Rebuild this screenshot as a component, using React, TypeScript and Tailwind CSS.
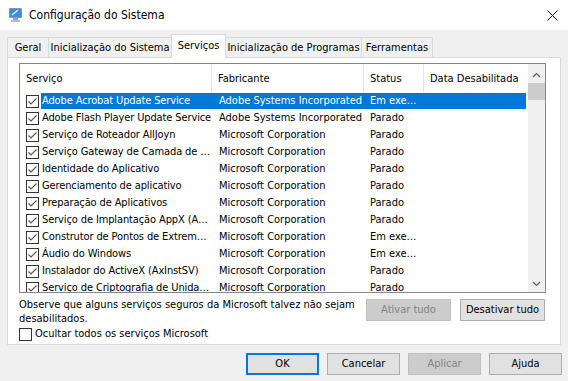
import React from 'react';

const rows = [
  ['Adobe Acrobat Update Service', 'Adobe Systems Incorporated', 'Em exe…'],
  ['Adobe Flash Player Update Service', 'Adobe Systems Incorporated', 'Parado'],
  ['Serviço de Roteador AllJoyn', 'Microsoft Corporation', 'Parado'],
  ['Serviço Gateway de Camada de …', 'Microsoft Corporation', 'Parado'],
  ['Identidade do Aplicativo', 'Microsoft Corporation', 'Parado'],
  ['Gerenciamento de aplicativo', 'Microsoft Corporation', 'Parado'],
  ['Preparação de Aplicativos', 'Microsoft Corporation', 'Parado'],
  ['Serviço de Implantação AppX (A…', 'Microsoft Corporation', 'Parado'],
  ['Construtor de Pontos de Extrem…', 'Microsoft Corporation', 'Em exe…'],
  ['Áudio do Windows', 'Microsoft Corporation', 'Em exe…'],
  ['Instalador do ActiveX (AxInstSV)', 'Microsoft Corporation', 'Parado'],
  ['Serviço de Criptografia de Unida…', 'Microsoft Corporation', 'Parado'],
];

const tabs = [
  { label: 'Geral', w: 'w-[42px]' },
  { label: 'Inicialização do Sistema', w: 'w-[124px]' },
  { label: 'Serviços', w: 'w-[55px]', active: true },
  { label: 'Inicialização de Programas', w: 'w-[137px]' },
  { label: 'Ferramentas', w: 'w-[72px]' },
];

function CheckBox({ checked }: { checked: boolean }) {
  return (
    <svg width="13" height="13" viewBox="0 0 13 13" className="shrink-0">
      <rect x="0.5" y="0.5" width="12" height="12" fill="#fff" stroke="#333" />
      {checked && <polyline points="2.5,6.5 5,9 10.5,3.5" fill="none" stroke="#555" strokeWidth="1.1" />}
    </svg>
  );
}

function AppIcon() {
  return (
    <svg width="16" height="16" viewBox="0 0 16 16">
      <rect x="1" y="1" width="13" height="10" rx="1" fill="#8a95a5" />
      <rect x="2" y="2" width="11" height="8" fill="#3a8de0" />
      <path d="M4 8 L10 3" stroke="#e8f2ff" strokeWidth="1.3" />
      <rect x="5" y="11" width="5" height="2" fill="#9aa3ad" />
      <rect x="3" y="13" width="9" height="2" rx="0.5" fill="#b6bcc4" />
    </svg>
  );
}

function Btn({ children, disabled, primary, w }: { children: React.ReactNode; disabled?: boolean; primary?: boolean; w: string }) {
  const cls = disabled
    ? 'bg-[#cccccc] border border-[#bfbfbf] text-[#838383]'
    : primary
    ? 'bg-[#e1e1e1] border-2 border-[#0078d7] text-black'
    : 'bg-[#e1e1e1] border border-[#adadad] text-black';
  return <div className={`${w} h-[22px] flex items-center justify-center ${cls}`}>{children}</div>;
}

export default function App() {
  return (
    <div className="w-[568px] h-[381px] bg-[#f0f0f0] flex flex-col text-black text-[11px] leading-[14px] font-['DejaVu_Sans_Condensed','Liberation_Sans',sans-serif] overflow-hidden">
      {/* title bar */}
      <div className="h-[30px] bg-white flex items-center shrink-0">
        <div className="ml-[8px] mt-[-1px]"><AppIcon /></div>
        <div className="ml-[5px] text-[12px] leading-[18px]">Configuração do Sistema</div>
        <div className="ml-auto mr-[10px]">
          <svg width="11" height="11" viewBox="0 0 11 11">
            <path d="M0.5 0.5 L10.5 10.5 M10.5 0.5 L0.5 10.5" stroke="#111" strokeWidth="1" />
          </svg>
        </div>
      </div>

      {/* tabs */}
      <div className="h-[27px] flex items-end pl-[7px] shrink-0">
        {tabs.map((t) =>
          t.active ? (
            <div key={t.label} className={`${t.w} h-[24px] -mb-px -ml-px bg-white border border-b-0 border-[#d9d9d9] flex items-center justify-center relative z-10 pb-[2px] whitespace-nowrap`}>
              {t.label}
            </div>
          ) : (
            <div key={t.label} className={`${t.w} h-[20px] bg-[#f0f0f0] border border-b-0 border-[#d9d9d9] -ml-px first:ml-0 flex items-center justify-center whitespace-nowrap`}>
              {t.label}
            </div>
          )
        )}
      </div>

      {/* panel */}
      <div className="mx-[7px] w-[554px] h-[288px] bg-white border border-[#d9d9d9] shrink-0 pl-[11px] pt-[5px]">
        <div className="w-[527px] h-[230px] border border-[#828790] flex">
          <div className="w-[508px] flex flex-col overflow-hidden">
            <div className="h-[28px] flex shrink-0">
              {[
                ['Serviço', 'w-[192px]'],
                ['Fabricante', 'w-[152px]'],
                ['Status', 'w-[60px]'],
                ['Data Desabilitada', 'w-[104px]'],
              ].map(([h, w], i) => (
                <div key={h} className={`${w} h-full flex items-center pl-[6px] pt-[2px] whitespace-nowrap ${i < 3 ? 'border-r border-[#e5e5e5]' : ''}`}>
                  {h}
                </div>
              ))}
            </div>
            {rows.map((r, i) => (
              <div key={i} className="h-[17px] flex items-center shrink-0 whitespace-nowrap pt-[1px]">
                <div className="pl-[6px] w-[21px] shrink-0 flex items-center"><CheckBox checked /></div>
                <div className={`flex-1 h-full flex items-center mr-[2px] ${i === 0 ? 'bg-[#0078d7] text-white' : ''}`}>
                  <div className="w-[171px] pl-[1px] tracking-[-0.12px]">{r[0]}</div>
                  <div className="w-[152px] pl-[7px] overflow-hidden">{r[1]}</div>
                  <div className="w-[60px] pl-[6px] overflow-hidden">{r[2]}</div>
                </div>
              </div>
            ))}
          </div>
          {/* scrollbar */}
          <div className="w-[17px] bg-[#f0f0f0] flex flex-col items-center">
            <div className="h-[17px] w-full flex items-center justify-center mt-[2px]">
              <svg width="9" height="6" viewBox="0 0 9 6"><path d="M1 5 L4.5 1.5 L8 5" fill="none" stroke="#606060" strokeWidth="1.2" /></svg>
            </div>
            <div className="w-[17px] h-[17px] bg-[#cdcdcd]" />
            <div className="flex-1" />
            <div className="h-[17px] w-full flex items-center justify-center">
              <svg width="9" height="6" viewBox="0 0 9 6"><path d="M1 1 L4.5 4.5 L8 1" fill="none" stroke="#606060" strokeWidth="1.2" /></svg>
            </div>
          </div>
        </div>

        {/* bottom of panel */}
        <div className="flex mt-[5px]">
          <div className="w-[345px] flex flex-col">
            <div className="leading-[14px]">
              Observe que alguns serviços seguros da Microsoft talvez não sejam desabilitados.
            </div>
            <div className="flex items-center gap-[3px] mt-[1px] h-[14px]">
              <CheckBox checked={false} />
              <span>Ocultar todos os serviços Microsoft</span>
            </div>
          </div>
          <div className="ml-[2px] flex gap-[9px] mt-[1px]">
            <Btn w="w-[85px]" disabled>Ativar tudo</Btn>
            <Btn w="w-[85px]">Desativar tudo</Btn>
          </div>
        </div>
      </div>

      {/* dialog buttons */}
      <div className="flex justify-end gap-[8px] pr-[6px] pt-[8px]">
        <Btn w="w-[73px]" primary>OK</Btn>
        <Btn w="w-[73px]">Cancelar</Btn>
        <Btn w="w-[73px]" disabled>Aplicar</Btn>
        <Btn w="w-[73px]">Ajuda</Btn>
      </div>
    </div>
  );
}
